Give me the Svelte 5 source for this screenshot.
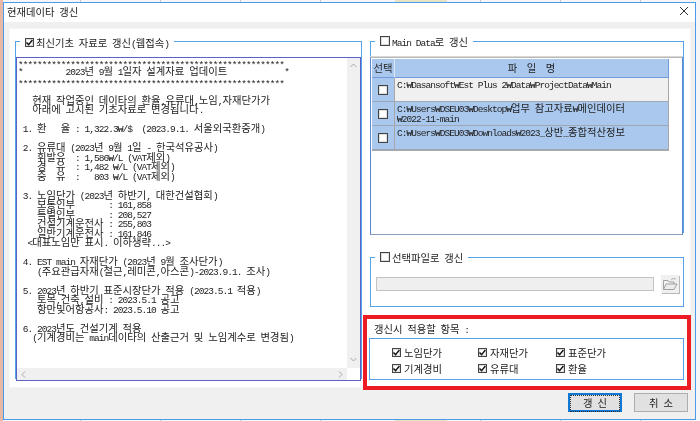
<script>
  const notice = [
    '*'.repeat(56),
    '*         2023년 9월 1일자 설계자료 업데이트            *',
    '*'.repeat(56),
    '',
    '   현재 작업중인 데이타의 환율,유류대,노임,자재단가가',
    '   아래에 고시된 기초자료로 변경됩니다.',
    '',
    ' 1. 환   율 : 1,322.3₩/$  (2023.9.1. 서울외국환중개)',
    '',
    ' 2. 유류대 (2023년 9월 1일 - 한국석유공사)',
    '    휘발유  : 1,586₩/L (VAT제외)',
    '    경  유  : 1,482 ₩/L (VAT제외)',
    '    중  유  :   803 ₩/L (VAT제외)',
    '',
    ' 3. 노임단가 (2023년 하반기, 대한건설협회)',
    '    보통인부       : 161,858',
    '    특별인부       : 208,527',
    '    건설기계운전사 : 255,803',
    '    일반기계운전사 : 161,846',
    '  <대표노임만 표시. 이하생략...>',
    '',
    ' 4. EST main 자재단가 (2023년 9월 조사단가)',
    '    (주요관급자재(철근,레미콘,아스콘)-2023.9.1. 조사)',
    '',
    ' 5. 2023년 하반기 표준시장단가 적용 (2023.5.1 적용)',
    '    토목,건축,설비 : 2023.5.1 공고',
    '    항만및어항공사: 2023.5.10 공고',
    '',
    ' 6. 2023년도 건설기계 적용',
    '   (기계경비는 main데이타의 산출근거 및 노임계수로 변경됨)'
  ]

  const files = [
    { lines: ['C:₩Dasansoft₩Est Plus 2₩Data₩ProjectData₩Main'], current: true },
    { lines: ['C:₩Users₩DSEU03₩Desktop₩업무 참고자료₩메인데이터', '₩2022-11-main'] },
    { lines: ['C:₩Users₩DSEU03₩Downloads₩2023_상반_종합적산정보'] }
  ]

  const applyItems = ['노임단가', '자재단가', '표준단가', '기계경비', '유류대', '환율']

  // gulim-style cells: latin takes half the width of a hangul syllable
  function runs (text) {
    return text.split(/([\uAC00-\uD7A3]+)/).filter(Boolean).map(t => ({
      t,
      ko: /[\uAC00-\uD7A3]/.test(t)
    }))
  }
</script>

{#snippet txt(text)}{#each runs(text) as r}<span class:lat={!r.ko}>{r.t}</span>{/each}{/snippet}

{#snippet check(on)}
  <span class="check" class:on>
    {#if on}
      <svg width="7" height="7" viewBox="0 0 7 7"><path d="M0.5 3.5 L2.6 5.6 L6.4 1" fill="none" stroke="#111" stroke-width="1.4" /></svg>
    {/if}
  </span>
{/snippet}

<div class="desktop">
  <div class="window">
    <header class="titlebar">
      <span class="title">{@render txt('현재데이타 갱신')}</span>
      <svg class="close" width="10" height="10" viewBox="0 0 10 10"><path d="M1 1 L9 9 M9 1 L1 9" stroke="#333" stroke-width="1" /></svg>
    </header>

    <main class="panel">
      <fieldset class="group left">
        <legend>{@render check(true)}<span class="legend-text">{@render txt('최신기초 자료로 갱신(웹접속)')}</span></legend>
        <div class="notice">
          <div class="notice-text">
            {#each notice as line}
              <div class="line" class:stars={line.startsWith('***')}>{@render txt(line)}</div>
            {/each}
          </div>
          <div class="vbar">
            <svg width="7" height="5" viewBox="0 0 7 5"><path d="M0.5 4 L3.5 1 L6.5 4" fill="none" stroke="#a8a8a8" /></svg>
            <svg width="7" height="5" viewBox="0 0 7 5"><path d="M0.5 1 L3.5 4 L6.5 1" fill="none" stroke="#a8a8a8" /></svg>
          </div>
          <div class="hbar">
            <svg width="5" height="7" viewBox="0 0 5 7"><path d="M4 0.5 L1 3.5 L4 6.5" fill="none" stroke="#a8a8a8" /></svg>
            <svg width="5" height="7" viewBox="0 0 5 7"><path d="M1 0.5 L4 3.5 L1 6.5" fill="none" stroke="#a8a8a8" /></svg>
          </div>
          <div class="corner"></div>
        </div>
      </fieldset>

      <div class="right">
        <fieldset class="group main-data">
          <legend>{@render check(false)}<span class="legend-text">{@render txt('Main Data로 갱신')}</span></legend>
          <div class="grid-box">
            <div class="file-grid">
              <div class="head sel">{@render txt('선택')}</div>
              <div class="head name">{@render txt('파  일  명')}</div>
              {#each files as file}
                <div class="sel-cell">{@render check(false)}</div>
                <div class="name-cell" class:current={file.current}>
                  {#each file.lines as l}
                    <div class="line">{@render txt(l)}</div>
                  {/each}
                </div>
              {/each}
            </div>
          </div>
        </fieldset>

        <fieldset class="group pick">
          <legend>{@render check(false)}<span class="legend-text">{@render txt('선택파일로 갱신')}</span></legend>
          <div class="pick-row">
            <div class="path-input"></div>
            <button class="folder" aria-label="찾아보기">
              <svg width="16" height="14" viewBox="0 0 16 14">
                <path d="M1.5 12.5 V3.5 H6 L7 5 H12 V7" fill="#f4f4f4" stroke="#a0a0a0" />
                <path d="M1.5 12.5 L4 7 H15 L12 12.5 Z" fill="#ececec" stroke="#a0a0a0" />
                <path d="M9 3 Q11 0.5 14 2" fill="none" stroke="#b0b0b0" />
              </svg>
            </button>
          </div>
        </fieldset>

        <div class="apply-label">{@render txt('갱신시 적용할 항목 :')}</div>
        <div class="apply-box">
          {#each applyItems as item}
            <span class="apply-item">{@render check(true)}<span>{@render txt(item)}</span></span>
          {/each}
        </div>
      </div>

      <div class="highlight"></div>
    </main>

    <footer class="actions">
      <button class="btn primary"><span class="focus">{@render txt('갱 신')}</span></button>
      <button class="btn">{@render txt('취 소')}</button>
    </footer>
  </div>
</div>

<style>
  :global(body) {
    margin: 0;
    overflow: hidden;
  }

  .desktop {
    box-sizing: border-box;
    width: 700px;
    height: 421px;
    padding: 2px 4px 1px 3px;
    background:
      linear-gradient(#e9b7a5, #e9b7a5) left / 3px 100% no-repeat,
      linear-gradient(#e8e2c4, #e8e2c4) 395px 0 / 52px 100% no-repeat,
      repeating-linear-gradient(90deg, #c4c8cc 0 1px, #f4f6f8 1px 80px);
    font-family: "Noto Sans CJK KR", "Liberation Sans", sans-serif;
    font-size: 10.33px;
    color: #222;
    white-space: pre;
    filter: blur(0.3px);
  }

  .lat {
    font-family: "Liberation Mono", monospace;
    font-size: 9.5px;
    letter-spacing: -0.95px;
  }

  .window {
    box-sizing: border-box;
    height: 100%;
    display: flex;
    flex-direction: column;
    border: 1px solid #4a9ce8;
    background: #f0f0f0;
  }

  .titlebar {
    flex: none;
    box-sizing: border-box;
    height: 19px;
    display: flex;
    align-items: center;
    justify-content: space-between;
    padding: 0 6px 3px 3px;
    background: #fff;
  }

  .panel {
    position: relative;
    flex: none;
    box-sizing: border-box;
    height: 358px;
    margin: 7px 5px 0 6px;
    padding: 5px 6px 7px 5px;
    display: flex;
    gap: 8px;
    background: #fff;
    box-shadow: 0 0 0 1px #f6f6f6;
  }

  .group {
    box-sizing: border-box;
    margin: 0;
    padding: 0;
    min-width: 0;
    border: 1px solid #56a2ea;
  }

  legend {
    box-sizing: border-box;
    display: flex;
    align-items: center;
    height: 14px;
    padding: 0 5px;
    margin-left: 4px;
    margin-bottom: -14px;
  }

  .left legend {
    padding-top: 3px;
  }

  .legend-text {
    margin-left: 2px;
  }

  .check {
    box-sizing: border-box;
    flex: none;
    display: inline-flex;
    align-items: center;
    justify-content: center;
    width: 10px;
    height: 10px;
    border: 1px solid #444;
    background: #fff;
    box-shadow: inset 0 0 0 1px #ddd;
  }

  .check.on {
    width: 9px;
    height: 9px;
  }

  .left {
    width: 347px;
    height: 345px;
  }

  .notice {
    box-sizing: border-box;
    height: 324px;
    margin-top: 7px;
    display: grid;
    grid-template-columns: 1fr 13px;
    grid-template-rows: 1fr 12px;
    border: 1px solid #5a62c4;
    background: #fff;
  }

  .notice-text {
    margin-top: -1.5px;
    padding-left: 1px;
  }

  .line {
    box-sizing: border-box;
    height: 9.5px;
    line-height: 9.5px;
  }

  .stars {
    padding-top: 2.5px;
  }

  .vbar {
    display: flex;
    flex-direction: column;
    align-items: center;
    justify-content: space-between;
    padding: 5px 0 6px;
    background: #f0f0f0;
  }

  .hbar {
    display: flex;
    align-items: center;
    justify-content: space-between;
    padding: 0 4px;
    background: #f0f0f0;
  }

  .corner {
    background: #fff;
  }

  .right {
    width: 314px;
    display: flex;
    flex-direction: column;
  }

  .main-data {
    height: 199px;
    border-bottom: none;
  }

  .grid-box {
    box-sizing: border-box;
    height: 178px;
    margin-top: 7px;
    margin-left: -1px;
    padding: 1px 13px 0 1px;
    border: 1px solid #5f86cf;
    border-top-color: #b8b8b8;
    border-bottom-color: #8a9cc0;
    box-shadow: 0 -1px 0 #d8d8d8;
    background: #fff;
  }

  .file-grid {
    display: grid;
    grid-template-columns: 23px 1fr;
    grid-template-rows: 19px 24px 24px 24px;
    background: #aac8ee;
    border-bottom: 1px solid #a8a8a8;
  }

  .head {
    display: flex;
    align-items: center;
    justify-content: center;
    padding-bottom: 2px;
    border-bottom: 1px solid #6f9bdc;
  }

  .sel {
    border-right: 1px solid #d8e6f8;
  }

  .name {
    border-right: 1px solid #6f9bdc;
  }

  .sel-cell {
    display: flex;
    align-items: center;
    justify-content: center;
    border-bottom: 1px solid #9aa7ba;
    border-right: 1px solid #a8a8a8;
  }

  .name-cell {
    padding: 1px 0 0 2px;
    border-bottom: 1px solid #a0a8b4;
    border-right: 1px solid #a8a8a8;
  }

  .name-cell .line {
    height: 10px;
  }

  .current {
    background: #f0f0f0;
  }

  .pick {
    height: 57px;
    margin-top: 17px;
  }

  .pick-row {
    display: flex;
    align-items: center;
    gap: 7px;
    padding: 9px 4px 0 5px;
  }

  .path-input {
    flex: 1;
    height: 14px;
    box-sizing: border-box;
    background: #efefef;
    border: 1px solid #c4c4c4;
  }

  .folder {
    flex: none;
    width: 18px;
    height: 18px;
    padding: 0;
    display: flex;
    align-items: center;
    justify-content: center;
    background: #f0f0f0;
    border: none;
    box-shadow: 1px 1px 0 #b8b8b8;
  }

  .apply-label {
    height: 14px;
    margin-top: 15px;
    padding-left: 4px;
    line-height: 14px;
  }

  .apply-box {
    box-sizing: border-box;
    height: 42px;
    margin-top: 2px;
    margin-left: -1px;
    padding: 5px 0 0 22px;
    display: grid;
    grid-template-columns: 86px 78px 1fr;
    grid-auto-rows: 16px;
    border: 1px solid #56a2ea;
  }

  .apply-item {
    display: flex;
    align-items: center;
    gap: 3px;
  }

  .highlight {
    position: absolute;
    left: 353px;
    top: 286px;
    width: 328px;
    height: 75px;
    box-sizing: border-box;
    border: 4px solid #ed1c24;
    pointer-events: none;
  }

  .actions {
    flex: 1;
    display: flex;
    justify-content: flex-end;
    gap: 12px;
    padding: 6px 7px 0 0;
  }

  .btn {
    box-sizing: border-box;
    width: 54px;
    height: 19px;
    padding: 0;
    font: inherit;
    color: #222;
    background: #e1e1e1;
    border: 1px solid #adadad;
  }

  .primary {
    border: 2px solid #0f78d4;
  }

  .focus {
    display: block;
    margin: 0;
    line-height: 13px;
    border: 1px dotted #333;
  }
</style>
